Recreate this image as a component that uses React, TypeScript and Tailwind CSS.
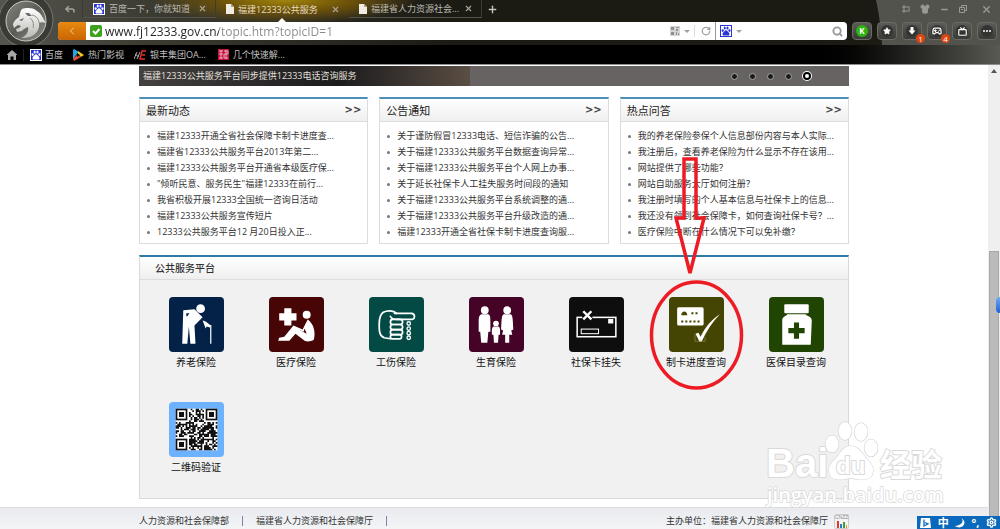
import clsx from 'clsx';
import {
  ChevronLeft,
  Gamepad2,
  Minus,
  Plus,
  Reply,
  RotateCw,
  Search,
  Settings,
  Shirt,
  Star,
  Tv,
  X,
} from 'lucide-react';
import type { ReactNode } from 'react';

const newsPanels = [
  {
    title: '最新动态',
    items: [
      '福建12333开通全省社会保障卡制卡进度查...',
      '福建省12333公共服务平台2013年第二...',
      '福建12333公共服务平台开通省本级医疗保...',
      '"倾听民意、服务民生"福建12333在前行...',
      '我省积极开展12333全国统一咨询日活动',
      '福建12333公共服务宣传短片',
      '12333公共服务平台12 月20日投入正...',
    ],
  },
  {
    title: '公告通知',
    items: [
      '关于谨防假冒12333电话、短信诈骗的公告...',
      '关于福建12333公共服务平台数据查询异常...',
      '关于福建12333公共服务平台个人网上办事...',
      '关于延长社保卡人工挂失服务时间段的通知',
      '关于福建12333公共服务平台系统调整的通...',
      '关于福建12333公共服务平台升级改造的通...',
      '福建12333开通全省社保卡制卡进度查询服...',
    ],
  },
  {
    title: '热点问答',
    items: [
      '我的养老保险参保个人信息部份内容与本人实际...',
      '我注册后，查看养老保险为什么显示不存在该用...',
      '网站提供了哪些功能？',
      '网站自助服务大厅如何注册？',
      '我注册时填写的个人基本信息与社保卡上的信息...',
      '我还没有领到社会保障卡，如何查询社保卡号？...',
      '医疗保险中断在什么情况下可以免补缴？',
    ],
  },
];

function Paw({ className }: { className?: string }) {
  return (
    <svg viewBox="0 0 24 24" className={className} fill="currentColor">
      <ellipse cx="4" cy="11" rx="2.6" ry="3.4" />
      <ellipse cx="9" cy="5" rx="2.5" ry="3.6" />
      <ellipse cx="15.5" cy="5" rx="2.5" ry="3.6" />
      <ellipse cx="20.3" cy="11" rx="2.6" ry="3.4" />
      <path d="M12 10c3 0 4 3 6 5s3 3.500 2 6-5 2-8 1.500c-3 .5-7 1-8-1.500s0-4 2-6 3-5 6-5z" />
    </svg>
  );
}

function PawBadge() {
  return (
    <span className="flex size-3 shrink-0 items-center justify-center border border-white bg-[#2a35d8] text-white">
      <Paw className="size-2.5" />
    </span>
  );
}

function FileIcon() {
  return (
    <svg viewBox="0 0 8 10" className="h-2.5 w-2 shrink-0">
      <path d="M0 0h5l3 3v7H0z" fill="#f1ece2" />
      <path d="M5 0v3h3z" fill="#a9a294" />
    </svg>
  );
}

function Tab({
  icon,
  title,
  active,
}: {
  icon: ReactNode;
  title: string;
  active?: boolean;
}) {
  return (
    <div
      className={clsx(
        'relative flex w-[133px] items-center gap-1 border-r pl-2.5 pr-2',
        active
          ? 'border-transparent text-[#e6dcc0]'
          : 'border-b border-b-[#55544c] border-r-[#3c3b34] text-[#b9b8b0]'
      )}
    >
      {icon}
      <span className="flex-1 whitespace-nowrap">{title}</span>
      <button aria-label="关闭标签页" className="text-[#a8a698]">
        <X size={9} strokeWidth={3} />
      </button>
      {active && (
        <span className="absolute -bottom-1 left-[62px] border-x-4 border-b-4 border-x-transparent border-b-white" />
      )}
    </div>
  );
}

function ToolButton({
  label,
  badge,
  green,
  children,
}: {
  label: string;
  badge?: number;
  green?: boolean;
  children: ReactNode;
}) {
  return (
    <button
      aria-label={label}
      className="relative flex h-[18px] w-5 items-center justify-center rounded-sm border border-[#6b6b66] bg-linear-to-b from-[#5b5b58] to-[#3a3a37] text-white"
    >
      <span
        className={clsx(
          'flex size-3 items-center justify-center rounded-full',
          green ? 'bg-[#2cb40f]' : 'bg-[#333331]'
        )}
      >
        {children}
      </span>
      {badge && (
        <span className="absolute -bottom-1 -right-1 flex size-[9px] items-center justify-center rounded-full bg-[#e04510] text-[8px] leading-none">
          {badge}
        </span>
      )}
    </button>
  );
}

function BrowserLogo() {
  return (
    <svg viewBox="0 0 58 45" className="h-[45px] w-[58px] shrink-0">
      <defs>
        <linearGradient id="disk" x1="0" y1="0" x2="1" y2="1">
          <stop offset="0" stopColor="#85857f" />
          <stop offset="0.5" stopColor="#5c5c57" />
          <stop offset="1" stopColor="#95958f" />
        </linearGradient>
        <linearGradient id="panther" x1="0" y1="0" x2="0" y2="1">
          <stop offset="0" stopColor="#ffffff" />
          <stop offset="1" stopColor="#b9b9b5" />
        </linearGradient>
      </defs>
      <circle cx="26" cy="20" r="27" fill="#3b3b36" stroke="#77776f" />
      <circle cx="26" cy="21" r="20" fill="url(#disk)" stroke="#c9c9c4" />
      <path
        d="M22 9c4-1 10-2 15 2 5 3 6 8 9 12-3-1-5-1-7 0 1 6-3 12-9 14-4 1-7 1-9 1 5-2 8-6 7-11-2 1-5 2-6 4l-5 1-1-3 3-1 2-2-3-1-4 3-1-3c0-3 3-6 6-8 1-3 1-6 3-8z"
        fill="url(#panther)"
      />
      <path d="M19 20l5-2-2 3zM25 13l3 3 4 0-3-3z" fill="#6a6a64" />
      <path
        d="M32 15c5 1 7 5 7 8M30 18c3 2 4 6 3 10"
        fill="none"
        stroke="#8a8a84"
      />
    </svg>
  );
}

function BrowserChrome() {
  return (
    <header className="relative shrink-0 border-b border-[#8d8d8d] bg-black">
      <div className="relative flex h-[45px] bg-[#1b1b14]">
        <div className="absolute inset-0 bg-linear-to-r from-[#55554e] via-[#3c3b32] via-15% to-transparent to-45%" />
        <div className="absolute left-[150px] top-0 h-6 w-[270px] bg-[radial-gradient(ellipse_at_50%_0%,#a0850c_0%,#6b500a_35%,transparent_70%)]" />
        <svg
          viewBox="0 0 124 45"
          className="absolute right-0 top-0 h-[45px] w-[124px]"
        >
          <path d="M0 0h124v45H6C5 28 3 14 0 0z" fill="#53534d" />
        </svg>
        <div className="relative flex min-w-0 flex-1">
          <BrowserLogo />
          <div className="flex min-w-0 flex-1 flex-col gap-1">
            <div className="flex h-[18px] text-[9px] leading-none">
              <button
                aria-label="恢复标签页"
                className="flex w-[25px] items-center justify-center border-r border-[#3c3b34] text-[#a3a29b]"
              >
                <Reply size={12} strokeWidth={3} />
              </button>
              <Tab icon={<PawBadge />} title="百度一下，你就知道" />
              <Tab icon={<FileIcon />} title="福建12333公共服务" active />
              <Tab icon={<FileIcon />} title="福建省人力资源社会..." />
              <button
                aria-label="新建标签页"
                className="flex w-5 items-center justify-center text-[#c4c3bc]"
              >
                <Plus size={11} strokeWidth={3} />
              </button>
              <div className="ml-auto flex items-center gap-1.5 pr-2 text-[#9a9a94]">
                <button aria-label="侧边栏">
                  <svg viewBox="0 0 8 8" className="size-2" fill="none">
                    <path
                      d="M1 1h2v2H1zM1 5h2v2H1zM4 2h4M4 6h4M6 4h2"
                      stroke="currentColor"
                    />
                  </svg>
                </button>
                <button aria-label="皮肤" className="pl-1">
                  <Shirt size={10} fill="currentColor" />
                </button>
                <button aria-label="最小化" className="pl-1">
                  <Minus size={9} strokeWidth={4} />
                </button>
                <button aria-label="还原" className="pl-1">
                  <svg viewBox="0 0 8 8" className="size-2" fill="none">
                    <path
                      d="M2.500 2V.5h5v5H6M.5 2.500h5v5h-5zM2 4.500h2"
                      stroke="currentColor"
                    />
                  </svg>
                </button>
                <button aria-label="关闭" className="pl-2">
                  <X size={11} strokeWidth={3} />
                </button>
              </div>
            </div>
            <div className="flex items-center gap-[5px] pr-[3px]">
              <div className="flex h-[18px] min-w-0 flex-1 overflow-hidden rounded-sm bg-white">
                <button
                  aria-label="后退"
                  className="flex w-7 shrink-0 items-center justify-center bg-linear-to-b from-[#e88a10] to-[#c96504] text-[#f6c98d]"
                >
                  <ChevronLeft size={12} />
                </button>
                <span className="ml-1 flex w-3 shrink-0 items-center">
                  <svg viewBox="0 0 12 12" className="size-3">
                    <rect width="12" height="12" rx="2" fill="#3da21d" />
                    <path
                      d="M3 6l2.500 2.500L9.500 4"
                      stroke="#fff"
                      strokeWidth="2"
                      fill="none"
                    />
                  </svg>
                </span>
                <input
                  aria-label="地址"
                  defaultValue="www.fj12333.gov.cn/topic.htm?topicID=1"
                  className="ml-[3px] min-w-0 flex-1 bg-linear-to-r from-[#222222] from-[114px] to-[#8a8a8a] to-[114px] bg-clip-text text-[12px] leading-none text-transparent outline-none"
                />
                <div className="flex items-center gap-1 text-[#a0a0a0]">
                  <button aria-label="二维码" className="flex items-center gap-1">
                    <svg viewBox="0 0 10 10" className="size-2.5">
                      <rect width="10" height="10" fill="#d6d6d6" />
                      <path
                        d="M1 1h3v3H1zM6 1h3v1H6zM6 3h2v2H6zM1 6h3v3H1zM6 6h1v3H6zM8 7h1v2H8z"
                        fill="#909090"
                      />
                    </svg>
                    <span className="border-x-[3px] border-t-[3px] border-x-transparent border-t-[#a0a0a0]" />
                  </button>
                  <span className="h-3 w-px bg-[#dddddd]" />
                  <button aria-label="刷新" className="pl-0.5 pr-1">
                    <RotateCw size={10} strokeWidth={3} />
                  </button>
                </div>
                <div className="flex w-[132px] shrink-0 items-center gap-1 border-l border-[#999999] pl-1 pr-1 text-[#999999]">
                  <button aria-label="百度搜索" className="flex items-center gap-1">
                    <span className="flex size-3 items-center justify-center border border-[#2a35d8] text-[#2a35d8]">
                      <Paw className="size-2.5" />
                    </span>
                    <span className="border-x-[3px] border-t-[3px] border-x-transparent border-t-[#a0a0a0]" />
                  </button>
                  <input
                    aria-label="搜索"
                    className="min-w-0 flex-1 text-[12px] outline-none"
                  />
                  <button aria-label="开始搜索">
                    <Search size={11} strokeWidth={4} />
                  </button>
                </div>
              </div>
              <ToolButton label="快捷" green>
                <span className="text-[8px] font-bold leading-none">K</span>
              </ToolButton>
              <ToolButton label="收藏">
                <Star size={8} fill="currentColor" />
              </ToolButton>
              <ToolButton label="下载" badge={1}>
                <svg viewBox="0 0 8 8" className="size-2" fill="currentColor">
                  <path d="M2.500 0h3v3.500h2L4 7.500.5 3.500h2z" />
                </svg>
              </ToolButton>
              <ToolButton label="游戏" badge={4}>
                <Gamepad2 size={10} strokeWidth={3} />
              </ToolButton>
              <ToolButton label="电视">
                <Tv size={9} strokeWidth={3} />
              </ToolButton>
              <ToolButton label="更多">
                <svg viewBox="0 0 8 2" className="w-2" fill="currentColor">
                  <circle cx="1" cy="1" r="1" />
                  <circle cx="4" cy="1" r="1" />
                  <circle cx="7" cy="1" r="1" />
                </svg>
              </ToolButton>
            </div>
          </div>
        </div>
      </div>
      <nav className="flex h-[19px] items-center bg-linear-to-r from-black from-80% to-[#5a5a54] text-[9px] leading-none text-[#c2c2c2]">
        <a
          href="#home"
          aria-label="主页"
          className="flex h-3 w-6 items-center justify-center border-r border-[#222222] text-[#a8a8a8]"
        >
          <svg viewBox="0 0 10 10" className="size-2.5" fill="currentColor">
            <path d="M5 0l5 4.500V5H9v5H6.500V6.500h-3V10H1V5H0v-.5z" />
          </svg>
        </a>
        <div className="flex items-center gap-2.5 pl-1.5">
          <a href="#baidu" className="flex items-center gap-[3px]">
            <PawBadge />
            百度
          </a>
          <a href="#video" className="flex items-center gap-1">
            <svg viewBox="0 0 11 12" className="h-3 w-[11px]">
              <path d="M1 0l5 3-3 3-3 5V1z" fill="#29a8e0" />
              <path d="M5 2l6 4-3 2-3-3z" fill="#f7c81e" />
              <path d="M8 8l-7 4-1-2 4-4z" fill="#e2532b" />
              <path d="M4 4l3 2-3 2z" fill="#111" />
            </svg>
            热门影视
          </a>
          <a href="#oa" className="flex items-center gap-1">
            <svg viewBox="0 0 12 10" className="h-2.5 w-3" fill="none">
              <path d="M0 9l3-7M3 9l3-7M1 4l4 3" stroke="#aaa" />
              <path
                d="M12 1H8L6 9h5M8 5h3"
                stroke="#e0322a"
                strokeWidth="1.500"
              />
            </svg>
            银丰集团OA...
          </a>
          <a href="#quick" className="flex items-center gap-1 pl-0.5">
            <svg viewBox="0 0 11 11" className="size-[11px]">
              <rect width="11" height="11" fill="#c4133e" />
              <path
                d="M1 2h4M3 1v9M1 5h4M1 9h4M6 2h4v3H6v4h4M8 1v9"
                stroke="#f3cdd6"
                strokeWidth="0.800"
                fill="none"
              />
            </svg>
            几个快速解...
          </a>
        </div>
      </nav>
    </header>
  );
}

function Banner() {
  return (
    <div className="flex h-5 bg-[#676363]">
      <div className="flex w-[331px] items-center bg-linear-to-r from-[#454140] via-[#1c1b1d] via-60% to-[#5b4e43] pl-1 text-[9px] text-[#e4e0dc]">
        福建12333公共服务平台同步提供12333电话咨询服务
      </div>
      <div className="flex flex-1 items-center justify-end gap-[11px] pr-[38px]">
        {[0, 1, 2, 3, 4].map((n) => (
          <button
            key={n}
            aria-label={`第${n + 1}张`}
            className={clsx(
              'rounded-full border',
              n === 4
                ? 'size-2 border-2 border-black bg-white ring-1 ring-white'
                : 'size-[7px] border-[#a9a6a6] bg-[#1a1a1a]'
            )}
          />
        ))}
      </div>
    </div>
  );
}

function NewsPanel({ title, items }: { title: string; items: string[] }) {
  return (
    <section className="min-w-0 border border-t-2 border-[#dcdcdc] border-t-[#4a8fb5]">
      <div className="flex h-[23px] items-center justify-between border-b border-[#dddddd] bg-linear-to-b from-white to-[#efefef] px-1.5">
        <h2 className="text-[11px] leading-none text-[#222222]">{title}</h2>
        <a
          href="#more"
          className="font-['DejaVu_Sans',sans-serif] text-[10px] font-bold leading-none text-[#444444]"
        >
          {'>>'}
        </a>
      </div>
      <ul className="pb-[3px] pl-[7px] pt-1.5 text-[9px] leading-4 text-[#333333]">
        {items.map((item) => (
          <li
            key={item}
            className="flex items-center gap-[7px] whitespace-nowrap"
          >
            <span className="size-[3px] shrink-0 rounded-full bg-[#777777]" />
            <a href="#article">{item}</a>
          </li>
        ))}
      </ul>
    </section>
  );
}

// 25x25 code with three finder squares, the rest is a fixed noise pattern
function QrCode() {
  const size = 25;
  const cells: string[] = [];
  let seed = 12333;
  for (let y = 0; y < size; y++) {
    for (let x = 0; x < size; x++) {
      seed = (seed * 1103515245 + 12345) % 2147483648;
      const inFinder =
        (x < 8 && y < 8) || (x > 16 && y < 8) || (x < 8 && y > 16);
      if (!inFinder && seed / 2147483648 > 0.42) {
        cells.push(`M${x} ${y}h1v1h-1z`);
      }
    }
  }
  return (
    <svg viewBox="-4 -4 33 33" className="size-full">
      <rect width="25" height="25" fill="#fff" />
      <path d={cells.join('')} fill="#111" />
      {[
        [0, 0],
        [18, 0],
        [0, 18],
      ].map(([x, y]) => (
        <g key={`${x}-${y}`}>
          <rect x={x} y={y} width="7" height="7" fill="#111" />
          <rect x={x + 1} y={y + 1} width="5" height="5" fill="#fff" />
          <rect x={x + 2} y={y + 2} width="3" height="3" fill="#111" />
        </g>
      ))}
    </svg>
  );
}

const services = [
  {
    name: '养老保险',
    color: 'bg-[#042248]',
    art: (
      <g fill="#fff">
        <circle cx="31" cy="11.500" r="4.300" />
        <path d="M14 13l11-1 8 8-8 8 1 18h-5l-1.500-17L18 46h-5z" />
        <path d="M33 23l3 1 5 4-1 2-3-1-1 2z" />
        <path d="M38 28h3v18" fill="none" stroke="#fff" strokeWidth="1.200" />
        <path d="M17 16h3l-2 3h-1z" fill="#042248" />
      </g>
    ),
  },
  {
    name: '医疗保险',
    color: 'bg-[#480506]',
    art: (
      <g fill="#fff">
        <path d="M15 11h7v5h5v7h-5v5h-7v-5h-5v-7h5z" />
        <circle cx="37" cy="17.500" r="3.900" />
        <path d="M38 22c6 4 8 13 6 20-3 2-7 2-9 1l-9-7-6 7H9l1-3 5-1 9-11 9 4z" />
        <path d="M29 32l5 2 1-3 2 5z" fill="#480506" />
      </g>
    ),
  },
  {
    name: '工伤保险',
    color: 'bg-[#034a45]',
    art: (
      <g
        fill="none"
        stroke="#fff"
        strokeWidth="1.700"
        strokeLinecap="round"
        strokeLinejoin="round"
      >
        <path d="M27 16c-3-3-9-3-13-1-3 2-4 6-4 12s0 11 5 13l6 1" />
        <path d="M25 16h17c4 1 3 6 0 6H27c-3 0-5-1-6-3" />
        <rect x="21" y="22" width="12" height="5" rx="2.500" />
        <rect x="21" y="27" width="12" height="5" rx="2.500" />
        <rect x="21" y="32" width="12" height="5" rx="2.500" />
        <rect x="21" y="37" width="11" height="4" rx="2" />
        <g strokeWidth="1.300">
          <circle cx="39" cy="26" r="1.700" />
          <circle cx="39" cy="31" r="1.700" />
          <circle cx="39" cy="35.500" r="1.700" />
          <circle cx="39" cy="40" r="1.700" />
        </g>
      </g>
    ),
  },
  {
    name: '生育保险',
    color: 'bg-[#450327]',
    art: (
      <g fill="#fff">
        <circle cx="15.500" cy="13" r="3.800" />
        <path d="M12 17h7c2 1 2 3 2 8v9h-2l-1 11h-6l-1-11H9.500v-9c0-5 .5-7 2.500-8z" />
        <circle cx="37.500" cy="13" r="3.800" />
        <path d="M34 17h7c2 1 2 5 2.500 15l-2 1 1 4h-3v8h-4v-8h-3l1-4-2-1c.5-10 .5-14 2.500-15z" />
        <circle cx="26.500" cy="26" r="2.800" />
        <path d="M24 29h5c2 1 1.500 5 1.500 8H29l-.5 8h-4l-.5-8h-1.500c0-3-.5-7 1.500-8z" />
      </g>
    ),
  },
  {
    name: '社保卡挂失',
    color: 'bg-[#0e0e0e]',
    art: (
      <g fill="none" stroke="#fff">
        <rect x="8" y="20" width="38" height="19" strokeWidth="1.500" />
        <rect x="12" y="31.500" width="17" height="4.500" />
        <rect x="39" y="22" width="4" height="3.500" fill="#fff" />
        <path d="M13 18.500h10v3H13z" fill="#0e0e0e" stroke="none" />
        <path d="M14 14l8 8M22 14l-8 8" strokeWidth="2.400" />
      </g>
    ),
  },
  {
    name: '制卡进度查询',
    color: 'bg-[#454503]',
    art: (
      <g fill="#fff">
        <rect x="8" y="10" width="26" height="18" rx="1.500" />
        <path
          d="M12 18c0-5 6-5 6 0zM22 15h2v2h-2zM26 15h2v2h-2zM12 23h2v2h-2zM16 23h2v2h-2zM20 23h2v2h-2zM24 23h2v2h-2zM28 23h2v2h-2z"
          fill="#454503"
        />
        <path d="M26 36l3-1 2 4c5-10 11-17 19-22-7 7-13 16-18 27h-2z" />
        <path
          d="M25.500 36.500v7h10v-4"
          fill="none"
          stroke="#8a8a55"
          strokeWidth="0.700"
        />
      </g>
    ),
  },
  {
    name: '医保目录查询',
    color: 'bg-[#204503]',
    art: (
      <g fill="#fff">
        <rect x="15" y="7" width="24" height="9" rx="1" />
        <path d="M18 17h18c1 2 6 2 6 6l-1 24H13V23c0-4 4-4 5-6z" />
        <path
          d="M24.500 25h5v5.500H35v5h-5.500V41h-5v-5.500H19v-5h5.500z"
          fill="#204503"
        />
      </g>
    ),
  },
  { name: '二维码验证', color: 'bg-[#6cb2ff]', art: null },
];

function ServicePanel() {
  return (
    <section className="border border-t-2 border-[#d9d9d9] border-t-[#2e7ba3] bg-[#f1f1f1]">
      <h2 className="flex h-[23px] items-center border-b border-[#dddddd] bg-linear-to-b from-white to-[#efefef] px-[15px] text-[10px] font-medium leading-none text-[#333333]">
        公共服务平台
      </h2>
      <ul className="grid grid-cols-7 gap-y-[33px] pb-6 pl-1.5 pr-0.5 pt-[17px]">
        {services.map(({ name, color, art }) => (
          <li key={name}>
            <a href="#service" className="flex flex-col items-center gap-[3px]">
              <span
                className={clsx('size-[55px] overflow-hidden rounded', color)}
              >
                {art ? (
                  <svg viewBox="0 0 54 54" className="size-full">
                    {art}
                  </svg>
                ) : (
                  <QrCode />
                )}
              </span>
              <span className="text-[10px] leading-[14px] text-[#111111]">
                {name}
              </span>
            </a>
          </li>
        ))}
      </ul>
    </section>
  );
}

function RedMarks() {
  return (
    <svg
      viewBox="0 0 710 433"
      className="pointer-events-none absolute left-0 top-0 h-[433px] w-[710px]"
      fill="none"
      stroke="#ed1c24"
      strokeWidth="3.500"
    >
      <path d="M545 93h12v59h8l-14 55-14-55h8z" />
      <ellipse cx="557.500" cy="269" rx="45" ry="53" />
    </svg>
  );
}

function Footer() {
  return (
    <footer className="flex-1 border-t border-[#dddddd] bg-linear-to-b from-[#e8eaee] to-[#f6f7f9]">
      <div className="mx-auto flex h-[26px] w-full max-w-[710px] items-center text-[9px] text-[#333333]">
        <a href="#mohrss">人力资源和社会保障部</a>
        <span className="mx-[13px] h-2.5 w-px bg-[#8b7fa8]" />
        <a href="#fjhrss">福建省人力资源和社会保障厅</a>
        <span className="mx-[13px] h-2.5 w-px bg-[#8b7fa8]" />
        <span className="ml-auto">主办单位：福建省人力资源和社会保障厅</span>
        <svg
          viewBox="0 0 15 15"
          className="ml-1.5 size-[15px]"
          fontFamily="Liberation Sans"
        >
          <rect
            x="0.500"
            y="0.500"
            width="14"
            height="14"
            rx="1"
            fill="#f4f4f4"
            stroke="#cccccc"
          />
          <text x="1" y="5" fontSize="5" fill="#888888">
            CNZZ
          </text>
          <path d="M3 7h2v7H3z" fill="#e0382c" />
          <path d="M6 10h2v4H6z" fill="#2f78c4" />
          <path d="M9 8h2v6H9z" fill="#3f9c3a" />
          <path d="M12 11h1v3h-1z" fill="#e58f22" />
        </svg>
      </div>
    </footer>
  );
}

function Watermark() {
  return (
    <svg
      viewBox="0 0 184 90"
      className="pointer-events-none absolute bottom-[22px] right-[52px] h-[90px] w-[184px]"
      fill="#ffffff"
      stroke="#d9d9d9"
      strokeWidth="2"
      strokeLinejoin="round"
      paintOrder="stroke"
    >
      <text
        x="2"
        y="60"
        fontFamily="Liberation Sans"
        fontWeight="700"
        fontSize="40"
      >
        Bai
      </text>
      <g strokeWidth="1.500">
        <ellipse cx="68" cy="27" rx="6.500" ry="8.500" />
        <ellipse cx="81" cy="14" rx="6.500" ry="9" />
        <ellipse cx="97" cy="15" rx="6.500" ry="9" />
        <ellipse cx="107" cy="31" rx="6.500" ry="8.500" />
        <path d="M87 29c8 0 11 8 16 13s8 10 5 16-12 5-21 3c-9 2-18 3-21-3s0-11 5-16 8-13 16-13z" />
      </g>
      <text
        x="72"
        y="57"
        fontFamily="Liberation Sans"
        fontWeight="700"
        fontSize="24"
      >
        du
      </text>
      <text
        x="116"
        y="59"
        fontFamily="Noto Sans CJK SC"
        fontWeight="700"
        fontSize="31"
      >
        经验
      </text>
      <text
        x="3"
        y="85"
        fontFamily="Open Sans"
        fontWeight="600"
        fontSize="20"
        strokeWidth="1.500"
      >
        jingyan.baidu.com
      </text>
    </svg>
  );
}

function ScrollBar() {
  return (
    <div className="relative flex w-3 shrink-0 flex-col items-center bg-[#efefef]">
      <span className="mt-1 border-x-[3px] border-b-4 border-x-transparent border-b-[#555555]" />
      <div className="absolute bottom-0 left-px top-2/5 w-2.5 border border-[#a8a8a8] bg-[#bbbbbb]" />
      <span className="absolute right-0 top-1/2 h-4 w-1 rounded-l-full bg-linear-to-b from-[#6fa8f2] to-[#1c62d6]" />
    </div>
  );
}

function ImeBar() {
  return (
    <div className="absolute bottom-0 right-0 flex h-[13px] w-[83px] items-center justify-around bg-[#0b69bd] text-[11px] leading-none text-white">
      <svg viewBox="0 0 11 10" className="h-2.5 w-[11px]">
        <path d="M1 0h9l1 10H0z" fill="#fff" />
        <path
          d="M4 1.500v6.500l4-2.200L5 4.500"
          fill="none"
          stroke="#0b69bd"
          strokeWidth="1.300"
        />
      </svg>
      <span className="font-bold">中</span>
      <svg viewBox="0 0 10 10" className="size-2.5" fill="#fff">
        <path d="M6 0c3 2 2 7-6 8 4 3 9 1 9.500-3C9.700 3 8 1 6 0z" />
      </svg>
      <span className="font-bold">°,</span>
      <Settings size={11} strokeWidth={3} />
    </div>
  );
}

export default function App() {
  return (
    <div className="relative flex h-screen flex-col overflow-hidden bg-white font-['Open_Sans','Noto_Sans_CJK_SC',sans-serif]">
      <BrowserChrome />
      <div className="flex min-h-0 flex-1">
        <main className="flex min-w-0 flex-1 flex-col pt-px">
          <div className="relative mx-auto mb-2 flex w-full max-w-[710px] flex-col gap-[11px]">
            <Banner />
            <div className="grid grid-cols-3 gap-[11px]">
              {newsPanels.map((panel) => (
                <NewsPanel key={panel.title} {...panel} />
              ))}
            </div>
            <ServicePanel />
            <RedMarks />
          </div>
          <Footer />
        </main>
        <ScrollBar />
      </div>
      <Watermark />
      <ImeBar />
    </div>
  );
}
